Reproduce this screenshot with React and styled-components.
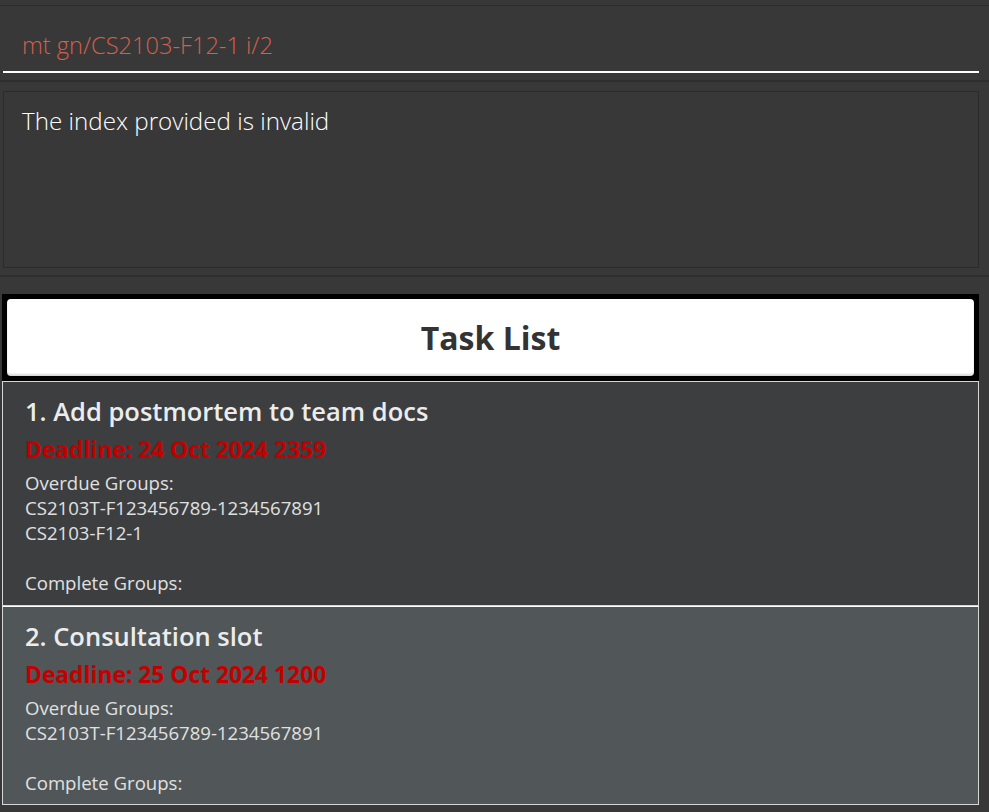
import styled, { createGlobalStyle } from 'styled-components';

const GlobalStyle = createGlobalStyle`
	html, body {
		margin: 0;
		padding: 0;
		background: #383838;
	}
	body {
		font-family: "Open Sans", "Noto Sans", sans-serif;
		overflow: hidden;
	}
`;

const tasks = [
	{
		id: 1,
		name: 'Add postmortem to team docs',
		deadline: '24 Oct 2024 2359',
		overdue: ['CS2103T-F123456789-1234567891', 'CS2103-F12-1'],
		complete: [],
	},
	{
		id: 2,
		name: 'Consultation slot',
		deadline: '25 Oct 2024 1200',
		overdue: ['CS2103T-F123456789-1234567891'],
		complete: [],
	},
];

const Page = styled.div`
	width: 989px;
	height: 812px;
	display: flex;
	flex-direction: column;
	background: #383838;
`;

const CommandSection = styled.div`
	margin-top: 5px;
	border-top: 1px solid #2c2c2c;
	border-bottom: 2px solid #2e2e2e;
	padding: 0 10px 7px 3px;
`;

const CommandField = styled.div`
	height: 67px;
	box-sizing: border-box;
	display: flex;
	align-items: center;
	padding: 12px 19px 0;
	border-bottom: 2px solid #ffffff;
	color: #d4604c;
	font-size: 23.6px;
	font-weight: 300;
`;

const ResultSection = styled.div`
	padding: 9px 10px 7px 3px;
	border-bottom: 2px solid #2e2e2e;
`;

const ResultBox = styled.div`
	height: 177px;
	box-sizing: border-box;
	border: 1px solid #2b2b2b;
	padding: 14px 18px;
	color: #ffffff;
	font-size: 24.2px;
	font-weight: 300;
	line-height: 30px;
`;

const ListPanel = styled.div`
	margin: 17px 10px 0 2px;
	background: #000000;
	padding-top: 5px;
	display: flex;
	flex-direction: column;
`;

const ListHeader = styled.div`
	margin: 0 5px 5px 5px;
	height: 77px;
	background: #ffffff;
	border-radius: 4px;
	box-shadow: inset 0 -2px 2px rgba(0, 0, 0, 0.15);
	display: flex;
	align-items: center;
	justify-content: center;
	color: #333333;
	font-size: 32px;
	font-weight: 700;
`;

const Card = styled.div`
	background: ${({ $alt }) => ($alt ? '#515658' : '#3c3e40')};
	border: 1px solid #d6d6d6;
	border-top-color: ${({ $alt }) => ($alt ? '#ffffff' : '#d6d6d6')};
	padding: 13px 22px ${({ $alt }) => ($alt ? '9px' : '10px')};
	display: flex;
	flex-direction: column;
`;

const Title = styled.div`
	color: #ececec;
	font-size: 25.5px;
	font-weight: 600;
	line-height: 32px;
`;

const Deadline = styled.div`
	margin-top: 9px;
	color: #c20000;
	font-size: 22.8px;
	font-weight: 700;
	line-height: 28px;
`;

const Groups = styled.div`
	margin-top: 6px;
	color: #e0e0e0;
	font-size: 18.6px;
	line-height: 25px;
`;

const Line = styled.div`
	min-height: 25px;
`;

const TaskCard = ({ index, task }) => (
	<Card $alt={index % 2 === 1}>
		<Title>{index + 1}. {task.name}</Title>
		<Deadline>Deadline: {task.deadline}</Deadline>
		<Groups>
			<Line>Overdue Groups:</Line>
			{task.overdue.map((g) => (
				<Line key={g}>{g}</Line>
			))}
			<Line />
			<Line>Complete Groups:</Line>
			{task.complete.map((g) => (
				<Line key={g}>{g}</Line>
			))}
		</Groups>
	</Card>
);

export default function App() {
	return (
		<Page>
			<GlobalStyle />
			<CommandSection>
				<CommandField>mt gn/CS2103-F12-1 i/2</CommandField>
			</CommandSection>
			<ResultSection>
				<ResultBox>The index provided is invalid</ResultBox>
			</ResultSection>
			<ListPanel>
				<ListHeader>Task List</ListHeader>
				{tasks.map((task, i) => (
					<TaskCard key={task.id} index={i} task={task} />
				))}
			</ListPanel>
		</Page>
	);
}
